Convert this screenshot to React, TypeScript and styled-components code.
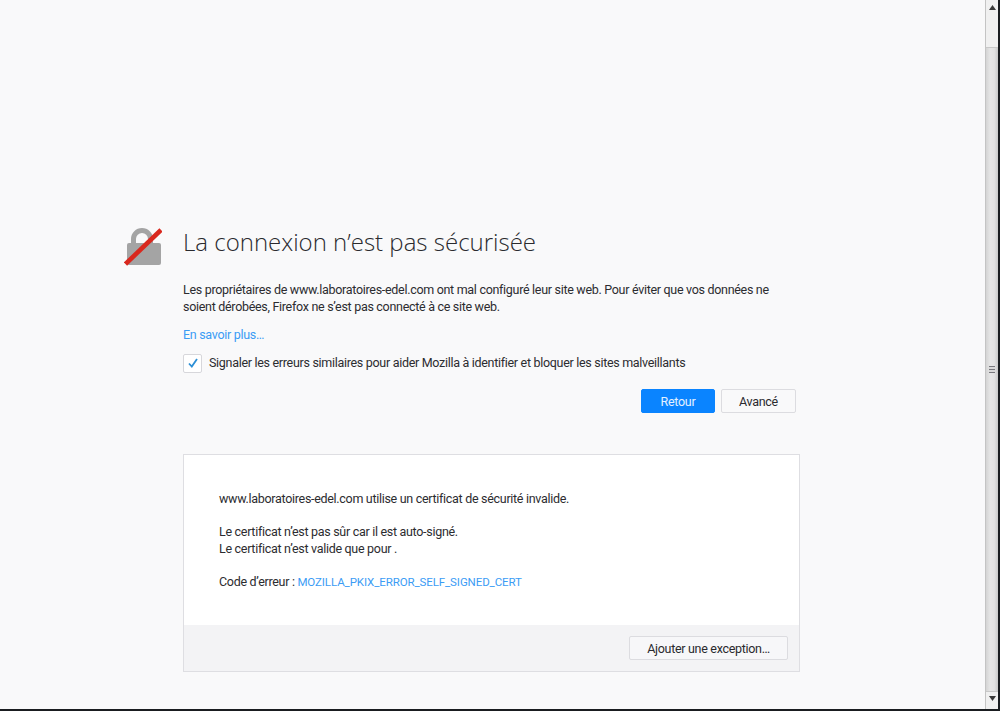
import styled, { createGlobalStyle } from 'styled-components';

const GlobalStyle = createGlobalStyle`
  html, body {
    margin: 0;
    padding: 0;
    height: 100%;
    overflow: hidden;
  }
  body {
    font-family: Roboto, "Open Sans", sans-serif;
    color: #2c2c30;
    background: #000;
  }
`;

const Screen = styled.div`
  width: 1000px;
  height: 711px;
  display: flex;
  flex-direction: column;
  background: #1a1d20;
`;

const Viewport = styled.div`
  height: 709px;
  display: flex;
`;

const Page = styled.main`
  width: 985px;
  background: #f9f9fa;
  padding: 224px 0 0 124px;
  box-sizing: border-box;
  font-size: 12.5px;
  letter-spacing: -0.3px;
`;

const Header = styled.div`
  display: flex;
  align-items: flex-start;
  gap: 21px;
`;

const LockIcon = styled.svg`
  width: 38px;
  height: 40px;
  flex: none;
  margin-top: 2px;
`;

const Content = styled.div`
  width: 617px;
`;

const Title = styled.h1`
  margin: 0;
  height: 36px;
  font-family: "Open Sans", sans-serif;
  font-size: 24px;
  line-height: 36px;
  font-weight: 300;
  letter-spacing: 0;
  color: #2a2a2e;
`;

const Description = styled.p`
  margin: 21px 0 0;
  line-height: 17px;
`;

const LearnMore = styled.a`
  display: block;
  margin-top: 11px;
  line-height: 17px;
  color: #3b9cf5;
`;

const ReportRow = styled.label`
  display: flex;
  align-items: center;
  gap: 7px;
  margin-top: 10px;
  line-height: 20px;
`;

const CheckBox = styled.span`
  width: 17px;
  height: 17px;
  border: 1px solid #d7d7db;
  border-radius: 2px;
  background: #fff;
  display: flex;
  align-items: center;
  justify-content: center;
`;

const Actions = styled.div`
  display: flex;
  justify-content: flex-end;
  gap: 6px;
  margin: 16px 4px 0 0;
`;

const Button = styled.button<{ $primary?: boolean }>`
  width: ${(p) => (p.$primary ? '74px' : '75px')};
  height: 24px;
  padding: 0;
  border: 1px solid ${(p) => (p.$primary ? '#0a84ff' : '#dcdce0')};
  border-radius: 2px;
  background: ${(p) => (p.$primary ? '#0a84ff' : '#f9f9fa')};
  color: ${(p) => (p.$primary ? '#e4f1ff' : '#2a2a2e')};
  font-family: inherit;
  font-size: inherit;
  letter-spacing: inherit;
`;

const Details = styled.section`
  margin-top: 41px;
  height: 218px;
  box-sizing: border-box;
  border: 1px solid #dedee2;
  background: #fff;
  display: flex;
  flex-direction: column;
`;

const DetailsBody = styled.div`
  flex: 1;
  padding: 36px 35px 0;
  line-height: 16.5px;
`;

const DetailsLine = styled.p<{ $gap?: boolean }>`
  margin: ${(p) => (p.$gap ? '16.5px' : '0')} 0 0;
`;

const ErrorCode = styled.a`
  color: #3b9cf5;
  font-size: 11.5px;
  letter-spacing: -0.1px;
`;

const DetailsFooter = styled.div`
  height: 46px;
  background: #f3f3f5;
  display: flex;
  align-items: center;
  justify-content: flex-end;
  padding: 0 11px 0 0;
`;

const ExceptionButton = styled(Button)`
  width: 159px;
  background: #f7f7f9;
`;

const Scrollbar = styled.div`
  width: 12px;
  background: #f0f0f0;
  border-left: 1px solid #c4c4c4;
  display: flex;
  flex-direction: column;
  align-items: stretch;
`;

const ArrowCell = styled.div`
  height: 47px;
  display: flex;
  align-items: flex-start;
  justify-content: center;
  padding-top: 5px;
  box-sizing: border-box;
`;

const BottomCell = styled(ArrowCell)`
  height: 17px;
  padding-top: 4px;
`;

const Thumb = styled.div`
  flex: 1;
  border-top: 1px solid #c8c8c8;
  border-bottom: 1px solid #c8c8c8;
  background: linear-gradient(to right, #d4d4d4, #e6e6e6 35%, #e2e2e2 70%, #c9c9c9);
  display: flex;
  align-items: center;
  justify-content: center;
`;

const Grip = styled.div`
  width: 6px;
  height: 7px;
  background: repeating-linear-gradient(to bottom, #77777c 0 1px, #d8d8d8 1px 3px);
`;

const BottomEdge = styled.div`
  height: 2px;
  background: #1a1d20;
`;

const ArrowSvg = styled.svg`
  width: 7px;
  height: 5px;
  fill: #3a3a3a;
`;

export default function App() {
  return (
    <>
      <GlobalStyle />
      <Screen>
        <Viewport>
          <Page>
            <Header>
              <LockIcon viewBox="0 0 38 40">
                <path
                  d="M7 18v-5a11 11 0 0 1 22 0v5h-5v-5a6 6 0 0 0-12 0v5z"
                  fill="#a4a4a4"
                />
                <rect x="3" y="17" width="34" height="22" rx="2" fill="#a4a4a4" />
                <path d="M1.5 38 L37 4" stroke="#d9281e" strokeWidth="4.6" />
              </LockIcon>
              <Content>
                <Title>La connexion n’est pas sécurisée</Title>
                <Description>
                  Les propriétaires de www.laboratoires-edel.com ont mal configuré leur site web. Pour éviter que vos données ne
                  <br />
                  soient dérobées, Firefox ne s’est pas connecté à ce site web.
                </Description>
                <LearnMore>En savoir plus…</LearnMore>
                <ReportRow>
                  <CheckBox>
                    <svg width="12" height="12" viewBox="0 0 12 12">
                      <path d="M2 6.5 L4.8 9.5 L10 2" fill="none" stroke="#2c8fd6" strokeWidth="1.8" />
                    </svg>
                  </CheckBox>
                  Signaler les erreurs similaires pour aider Mozilla à identifier et bloquer les sites malveillants
                </ReportRow>
                <Actions>
                  <Button $primary>Retour</Button>
                  <Button>Avancé</Button>
                </Actions>
                <Details>
                  <DetailsBody>
                    <DetailsLine>www.laboratoires-edel.com utilise un certificat de sécurité invalide.</DetailsLine>
                    <DetailsLine $gap>Le certificat n’est pas sûr car il est auto-signé.</DetailsLine>
                    <DetailsLine>Le certificat n’est valide que pour .</DetailsLine>
                    <DetailsLine $gap>
                      Code d’erreur : <ErrorCode>MOZILLA_PKIX_ERROR_SELF_SIGNED_CERT</ErrorCode>
                    </DetailsLine>
                  </DetailsBody>
                  <DetailsFooter>
                    <ExceptionButton>Ajouter une exception…</ExceptionButton>
                  </DetailsFooter>
                </Details>
              </Content>
            </Header>
          </Page>
          <Scrollbar>
            <ArrowCell>
              <ArrowSvg viewBox="0 0 7 5">
                <path d="M3.5 0 L7 5 H0 Z" />
              </ArrowSvg>
            </ArrowCell>
            <Thumb>
              <Grip />
            </Thumb>
            <BottomCell>
              <ArrowSvg viewBox="0 0 7 5">
                <path d="M0 0 H7 L3.5 5 Z" />
              </ArrowSvg>
            </BottomCell>
          </Scrollbar>
        </Viewport>
        <BottomEdge />
      </Screen>
    </>
  );
}
